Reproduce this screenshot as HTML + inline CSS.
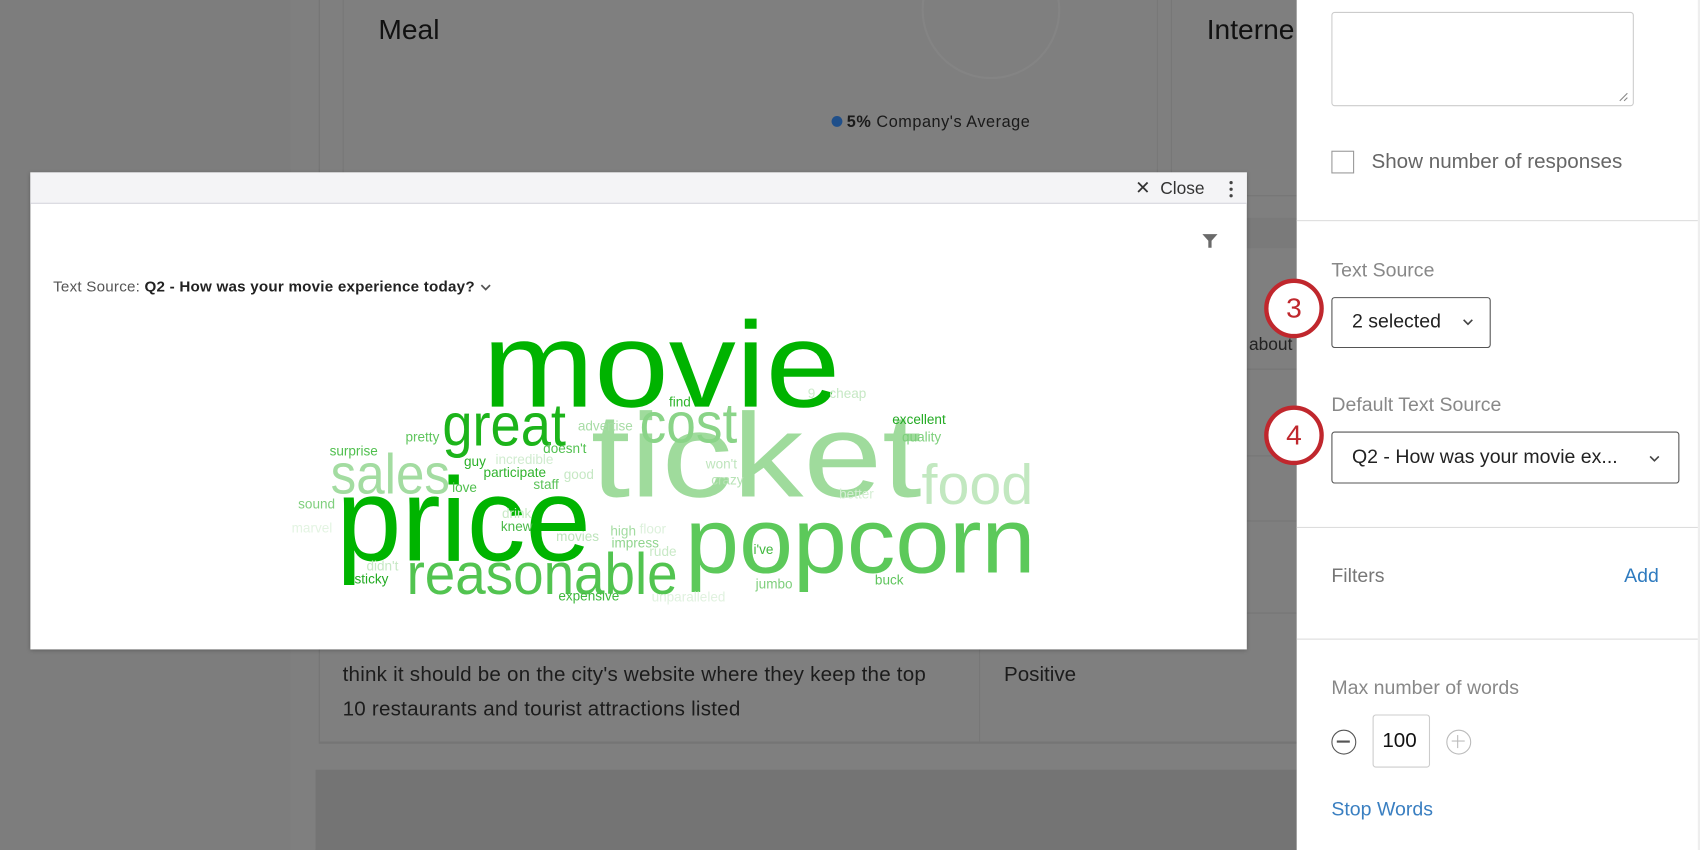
<!DOCTYPE html>
<html><head><meta charset="utf-8"><style>
html,body{margin:0;padding:0;width:1700px;height:850px;overflow:hidden;background:#7f7f7f;font-family:"Liberation Sans","DejaVu Sans",sans-serif}
#w{position:absolute;left:0;top:0;width:1568px;height:784px;transform:scale(1.08418);transform-origin:0 0;background:#7f7f7f}
.a{position:absolute}
.t{position:absolute;white-space:nowrap}
</style></head><body><div id="w">
<!-- background -->
<div class="a" style="left:0;top:0;width:268px;height:784px;background:#7d7d7d"></div>
<div class="a" style="left:294px;top:0;width:1px;height:684px;background:#747474"></div>
<div class="a" style="left:316px;top:0;width:750px;height:160px;border-left:1px solid #777;border-right:1px solid #777"></div>
<div class="a" style="left:1080px;top:0;width:1px;height:160px;background:#777"></div>
<div class="a" style="left:850px;top:-55px;width:124px;height:124px;border:2px solid #848484;border-radius:50%"></div>
<div class="t" style="left:349px;top:12px;font-size:26px;color:#111">Meal</div>
<div class="t" style="left:1113px;top:12px;font-size:26px;color:#111">Interne</div>
<div class="t" style="left:767px;top:104px;font-size:15px;color:#1a1a1a;letter-spacing:0.5px"><span style="display:inline-block;width:10px;height:10px;border-radius:50%;background:#1f4f8a;margin-right:4px"></span><b>5%</b> Company's Average</div>
<div class="a" style="left:1150px;top:180px;width:46px;height:1px;background:#767676"></div>
<div class="a" style="left:1150px;top:201px;width:46px;height:28px;background:#7a7a7a"></div>
<div class="a" style="left:1150px;top:340px;width:46px;height:1px;background:#767676"></div>
<div class="a" style="left:1150px;top:420px;width:46px;height:1px;background:#767676"></div>
<div class="a" style="left:1150px;top:480px;width:46px;height:1px;background:#767676"></div>
<div class="a" style="left:1150px;top:565px;width:46px;height:1px;background:#767676"></div>
<div class="t" style="left:1152px;top:310px;font-size:16px;color:#222">about</div>
<div class="a" style="left:294px;top:684px;width:902px;height:2px;background:#757575"></div>
<div class="a" style="left:903px;top:565px;width:1px;height:119px;background:#777"></div>
<div class="t" style="left:316px;top:612px;font-size:19px;color:#1c1c1c;letter-spacing:0.2px">think it should be on the city's website where they keep the top</div>
<div class="t" style="left:316px;top:644px;font-size:19px;color:#1c1c1c;letter-spacing:0.2px">10 restaurants and tourist attractions listed</div>
<div class="t" style="left:926px;top:612px;font-size:19px;color:#1c1c1c">Positive</div>
<div class="a" style="left:291px;top:710px;width:905px;height:74px;background:#747474"></div>

<!-- modal -->
<div class="a" style="left:28px;top:159px;width:1122px;height:440px;background:#fff;box-shadow:0 1px 4px rgba(0,0,0,.3)">
  <div class="a" style="left:0;top:0;width:1122px;height:28px;background:#f4f4f6;border-bottom:1px solid #d6d6de"></div>
  <div class="t" style="left:1019px;top:5px;font-size:16px;color:#333"><span style="font-size:17px;font-weight:bold">✕</span>&nbsp; Close</div>
  <div class="a" style="left:1106px;top:8px;width:3px;height:3px;background:#444;border-radius:50%;box-shadow:0 6px 0 #444,0 12px 0 #444"></div>
  <svg class="a" style="left:1080px;top:55px" width="16" height="16" viewBox="0 0 16 16"><path d="M1 2h14l-5.5 6v6.5h-3V8z" fill="#6a6a6a"/></svg>
  <div class="t" style="left:21px;top:97px;font-size:14px;color:#555;letter-spacing:0.2px">Text Source: <b style="color:#222">Q2 - How was your movie experience today?</b> <svg width="12" height="8" viewBox="0 0 12 8"><path d="M2 2l4 4 4-4" stroke="#555" stroke-width="1.6" fill="none"/></svg></div>
</div>
<svg class="a" style="left:0;top:0" width="1568" height="784" viewBox="0 0 1568 784" font-family="Liberation Sans, DejaVu Sans, sans-serif">
<g>
<text x="445" y="375" font-size="112" fill="#00b300" textLength="330" lengthAdjust="spacingAndGlyphs">movie</text>
<text x="545" y="458" font-size="110" fill="#9fdb9c" textLength="305" lengthAdjust="spacingAndGlyphs">ticket</text>
<text x="310" y="517" font-size="110" fill="#00b400" textLength="235" lengthAdjust="spacingAndGlyphs">price</text>
<text x="632" y="528" font-size="86" fill="#5cc95a" textLength="323" lengthAdjust="spacingAndGlyphs">popcorn</text>
<text x="375" y="548" font-size="54" fill="#52c450" textLength="250" lengthAdjust="spacingAndGlyphs">reasonable</text>
<text x="408" y="411" font-size="56" fill="#1cb41a" textLength="114" lengthAdjust="spacingAndGlyphs">great</text>
<text x="590" y="408" font-size="52" fill="#8ad488" textLength="90" lengthAdjust="spacingAndGlyphs">cost</text>
<text x="305" y="455" font-size="52" fill="#a3dca1" textLength="110" lengthAdjust="spacingAndGlyphs">sales</text>
<text x="850" y="465" font-size="52" fill="#c2e8c0" textLength="103" lengthAdjust="spacingAndGlyphs">food</text>
</g>
<g font-size="12.5">
<text x="617" y="375" fill="#2eb52c">find</text>
<text x="745" y="367" fill="#cdebcb">9</text>
<text x="765" y="367" fill="#c6e8c4">cheap</text>
<text x="533" y="397" fill="#a8dca6">advertise</text>
<text x="823" y="391" fill="#22aa22">excellent</text>
<text x="374" y="407" fill="#5fc55d">pretty</text>
<text x="832" y="407" fill="#7ccf7a">quality</text>
<text x="304" y="420" fill="#4fbf4d">surprise</text>
<text x="501" y="418" fill="#52c150">doesn't</text>
<text x="457" y="428" fill="#d0eccf">incredible</text>
<text x="428" y="430" fill="#2ab028">guy</text>
<text x="651" y="432" fill="#bfe5bd">won't</text>
<text x="446" y="440" fill="#30b32e">participate</text>
<text x="520" y="442" fill="#c6e8c4">good</text>
<text x="492" y="451" fill="#5dc35b">staff</text>
<text x="656" y="447" fill="#b8e3b6">crazy</text>
<text x="417" y="454" fill="#4fbf4d">love</text>
<text x="774" y="460" fill="#d4eed3">better</text>
<text x="275" y="469" fill="#7fcf7d">sound</text>
<text x="463" y="478" fill="#c8e9c6">drink</text>
<text x="269" y="491" fill="#e3f4e2">marvel</text>
<text x="462" y="490" fill="#4ab948">knew</text>
<text x="563" y="494" fill="#a3dca1">high</text>
<text x="590" y="492" fill="#ddf1dc">floor</text>
<text x="513" y="499" fill="#bde4bb">movies</text>
<text x="564" y="505" fill="#91d58f">impress</text>
<text x="695" y="511" fill="#3fb83d">i've</text>
<text x="599" y="513" fill="#c8e9c6">rude</text>
<text x="338" y="526" fill="#c6e8c4">didn't</text>
<text x="327" y="538" fill="#22aa22">sticky</text>
<text x="697" y="543" fill="#7fcf7d">jumbo</text>
<text x="807" y="539" fill="#5fc55d">buck</text>
<text x="515" y="554" fill="#3fb83d">expensive</text>
<text x="601" y="555" fill="#e0f2df">unparalleled</text>
</g>
</svg>

<!-- right panel -->
<div class="a" style="left:1196px;top:0;width:370px;height:784px;background:#fff;border-right:2px solid #eee">
  <div class="a" style="left:32px;top:11px;width:277px;height:85px;border:1px solid #ccc;border-radius:3px"></div>
  <svg class="a" style="left:296px;top:84px" width="10" height="10"><path d="M2 9L9 2M6 9L9 6" stroke="#888"/></svg>
  <div class="a" style="left:32px;top:139px;width:19px;height:19px;border:1px solid #999"></div>
  <div class="t" style="left:69px;top:139px;font-size:19px;color:#666">Show number of responses</div>
  <div class="a" style="left:0;top:203px;width:370px;height:1px;background:#ddd"></div>
  <div class="t" style="left:32px;top:239px;font-size:18px;color:#888">Text Source</div>
  <div class="a" style="left:32px;top:274px;width:145px;height:45px;border:1px solid #555;border-radius:3px"></div>
  <div class="t" style="left:51px;top:286px;font-size:18px;color:#222">2 selected</div>
  <svg class="a" style="left:152px;top:293px" width="12" height="8"><path d="M2 2l4 4 4-4" stroke="#444" stroke-width="1.5" fill="none"/></svg>
  <div class="t" style="left:32px;top:363px;font-size:18px;color:#888">Default Text Source</div>
  <div class="a" style="left:32px;top:398px;width:319px;height:46px;border:1px solid #555;border-radius:3px"></div>
  <div class="t" style="left:51px;top:411px;font-size:18px;color:#222">Q2 - How was your movie ex...</div>
  <svg class="a" style="left:324px;top:419px" width="12" height="8"><path d="M2 2l4 4 4-4" stroke="#444" stroke-width="1.5" fill="none"/></svg>
  <div class="a" style="left:0;top:486px;width:370px;height:1px;background:#ddd"></div>
  <div class="t" style="left:32px;top:521px;font-size:18px;color:#777">Filters</div>
  <div class="t" style="left:302px;top:521px;font-size:18px;color:#2f7bbf">Add</div>
  <div class="a" style="left:0;top:589px;width:370px;height:1px;background:#ddd"></div>
  <div class="t" style="left:32px;top:624px;font-size:18px;color:#888">Max number of words</div>
  <div class="a" style="left:32px;top:673px;width:21px;height:21px;border:1.5px solid #555;border-radius:50%"></div>
  <div class="a" style="left:37px;top:683px;width:12px;height:2px;background:#555"></div>
  <div class="a" style="left:70px;top:659px;width:51px;height:47px;border:1px solid #ccc;border-radius:3px"></div>
  <div class="t" style="left:79px;top:673px;font-size:19px;color:#111">100</div>
  <div class="a" style="left:138px;top:673px;width:21px;height:21px;border:1px solid #bbb;border-radius:50%"></div>
  <div class="a" style="left:143px;top:683px;width:12px;height:1px;background:#bbb"></div>
  <div class="a" style="left:148px;top:678px;width:1px;height:12px;background:#bbb"></div>
  <div class="t" style="left:32px;top:736px;font-size:18px;color:#3a7fc1">Stop Words</div>
</div>
<!-- callouts -->
<div class="a" style="left:1166px;top:257px;width:47px;height:47px;border:4px solid #c0272d;border-radius:50%;background:#fff;text-align:center;line-height:47px;font-size:26px;color:#c0272d">3</div>
<div class="a" style="left:1166px;top:374px;width:47px;height:47px;border:4px solid #c0272d;border-radius:50%;background:#fff;text-align:center;line-height:47px;font-size:26px;color:#c0272d">4</div>
</div></body></html>
